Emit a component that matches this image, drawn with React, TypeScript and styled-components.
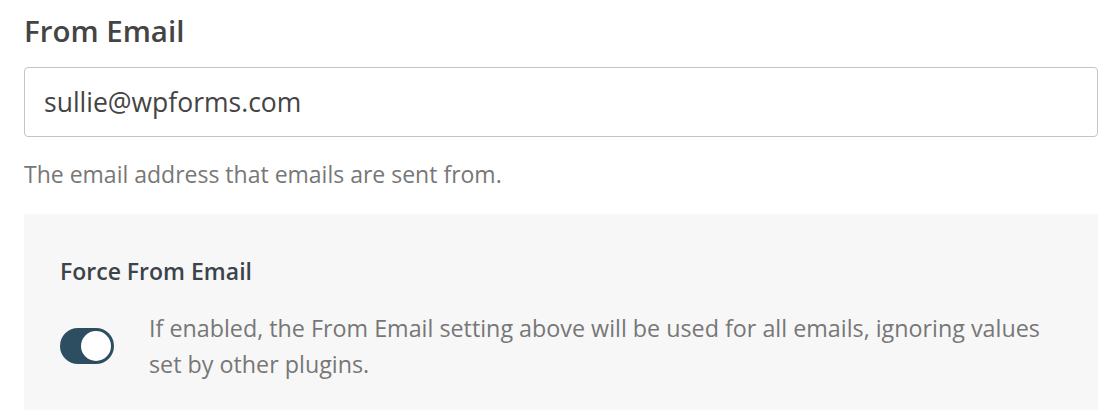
import React from "react";
import styled, { createGlobalStyle } from "styled-components";

const Global = createGlobalStyle`
  html, body { margin: 0; padding: 0; background: #ffffff; }
  body { font-family: "Open Sans", "Noto Sans", sans-serif; }
  * { box-sizing: border-box; }
`;

const Page = styled.div`
  width: 1116px;
  height: 410px;
  overflow: hidden;
  padding: 13px 18px 0 24px;
`;

const Heading = styled.h2`
  margin: 0;
  font-size: 29.5px;
  line-height: 36px;
  font-weight: 600;
  color: #444444;
`;

const Input = styled.input`
  display: block;
  width: 100%;
  height: 70px;
  margin-top: 18px;
  padding: 0 19px;
  border: 1px solid #c4c4c4;
  border-radius: 4px;
  font-family: inherit;
  font-size: 26.5px;
  color: #444444;
  background: #ffffff;
  outline: none;
`;

const Help = styled.p`
  margin: 22px 0 0;
  font-size: 23px;
  line-height: 30px;
  color: #777777;
`;

const Panel = styled.section`
  margin-top: 25px;
  background: #f7f7f7;
  padding: 42px 36px 40px;
  min-height: 220px;
`;

const PanelTitle = styled.h3`
  margin: 0;
  font-size: 23px;
  line-height: 30px;
  font-weight: 600;
  color: #3c434a;
`;

const Row = styled.div`
  display: flex;
  align-items: center;
  gap: 35px;
  margin-top: 24px;
`;

const Toggle = styled.span<{ $on: boolean }>`
  position: relative;
  flex: none;
  width: 54px;
  height: 36px;
  border-radius: 18px;
  background: ${(p) => (p.$on ? "#2d4e61" : "#c3c4c7")};
  &::after {
    content: "";
    position: absolute;
    top: 3px;
    left: ${(p) => (p.$on ? "21px" : "3px")};
    width: 30px;
    height: 30px;
    border-radius: 50%;
    background: #ffffff;
  }
`;

const Desc = styled.p`
  margin: 0;
  font-size: 23.3px;
  line-height: 36px;
  color: #777777;
  max-width: 912px;
`;

export default function App() {
  return (
    <>
      <Global />
      <Page>
        <Heading>From Email</Heading>
        <Input defaultValue="sullie@wpforms.com" />
        <Help>The email address that emails are sent from.</Help>
        <Panel>
          <PanelTitle>Force From Email</PanelTitle>
          <Row>
            <Toggle $on={true} />
            <Desc>
              If enabled, the From Email setting above will be used for all emails, ignoring values set by other plugins.
            </Desc>
          </Row>
        </Panel>
      </Page>
    </>
  );
}
